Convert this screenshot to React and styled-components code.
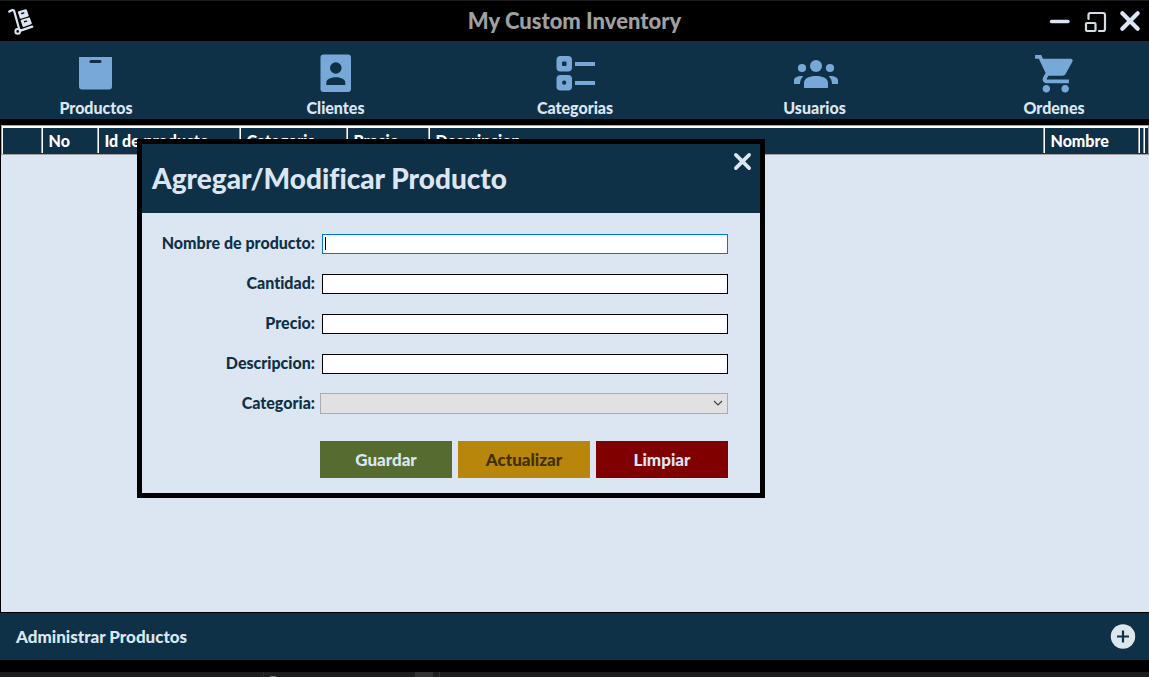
import React from "react";
import styled, { createGlobalStyle } from "styled-components";

const navy = "#0f3147";
const pale = "#dce6f2";
const sky = "#78a8d8";

const GlobalStyle = createGlobalStyle`
  * { box-sizing: border-box; }
  body {
    margin: 0;
    background: #1e1e1e;
    font-family: Lato, "Liberation Sans", sans-serif;
    font-weight: 900;
    font-size: 16px;
    line-height: 24px;
    font-variant-ligatures: none;
  }
  button, input, select { font: inherit; font-variant-ligatures: none; }
`;

const Page = styled.div`
  min-height: 100vh;
  display: flex;
  flex-direction: column;
  border-top: 1px solid #1c1c1c;
  background: #000;
`;

const TitleBar = styled.header`
  height: 40px;
  display: flex;
  align-items: center;
  justify-content: space-between;
  padding: 0 8px;
`;

const Title = styled.h1`
  margin: 0;
  font-size: 22px;
  font-weight: 900;
  line-height: 40px;
  color: #a0a0a0;
`;

const TitleSide = styled.div`
  flex: 1;
  display: flex;
  align-items: center;
  justify-content: ${(p) => (p.$end ? "flex-end" : "flex-start")};
  gap: 12px;
`;

const IconButton = styled.button`
  display: flex;
  padding: 0;
  border: 0;
  background: none;
  color: ${pale};
`;

const Nav = styled.nav`
  display: flex;
  justify-content: space-between;
  height: 78px;
  padding: 8px 35px 0 36px;
  background: ${navy};
`;

const NavButton = styled.button`
  width: 120px;
  display: flex;
  flex-direction: column;
  align-items: center;
  padding: 0;
  border: 0;
  background: none;
  color: ${pale};
  line-height: 22px;
`;

const Main = styled.main`
  position: relative;
  flex: 1;
  margin-top: 6px;
  border-left: 1px solid #000;
  border-bottom: 1px solid #000;
  background: ${pale};
`;

const Table = styled.table`
  width: 100%;
  table-layout: fixed;
  border-collapse: collapse;
  background: ${navy};
  color: #fff;
  border: 1px solid #a0a0a0;
  box-shadow: inset 1px 2px 0 #fff;
`;

const HeadCell = styled.th`
  height: 29px;
  padding: 0;
  text-align: left;
  vertical-align: middle;
  font-weight: 900;
`;

const HeadLabel = styled.div`
  height: 25px;
  padding-left: 6px;
  line-height: 25px;
  overflow: hidden;
  white-space: nowrap;
  border-left: ${(p) => (p.$first ? "0" : "1px solid #fff")};
  box-shadow: ${(p) => (p.$first ? "none" : "-1px 0 0 #a0a0a0")};
`;

const Dialog = styled.section`
  position: absolute;
  top: 14px;
  left: 136px;
  width: 628px;
  border: 5px solid #000;
  background: ${pale};
  color: ${navy};
`;

const DialogHeader = styled.div`
  display: flex;
  align-items: flex-start;
  justify-content: space-between;
  height: 69px;
  padding: 8px 8px 0 10px;
  background: ${navy};
  color: ${pale};
`;

const DialogTitle = styled.h2`
  margin: 0;
  font-size: 28px;
  font-weight: 900;
  line-height: 52px;
`;

const Form = styled.form`
  display: flex;
  flex-direction: column;
  gap: 16px;
  padding: 18px 32px 15px 14px;
`;

const Field = styled.div`
  display: grid;
  grid-template-columns: 159px 1fr;
  align-items: center;
  column-gap: 7px;
  height: 24px;
`;

const Label = styled.label`
  text-align: right;
  white-space: nowrap;
`;

const Input = styled.input`
  width: 100%;
  height: 20px;
  margin: 2px 0 0;
  padding: 0 2px;
  border: 1px solid #000;
  border-radius: 0;
  outline: 0;
  background: #fff;
  font-size: 14px;
  caret-color: transparent;
  &:focus {
    border-color: #0078d7;
    background: linear-gradient(#000, #000) 2px 2px / 1px 13px no-repeat #fff;
  }
`;

const SelectWrap = styled.div`
  display: flex;
  align-items: center;
  margin-left: -2px;
  padding-right: 4px;
  border: 1px solid #adadad;
  background: #e1e1e1;
`;

const Select = styled.select`
  flex: 1;
  height: 19px;
  border: 0;
  outline: 0;
  appearance: none;
  background: none;
`;

const Actions = styled.div`
  display: grid;
  grid-template-columns: repeat(3, 1fr);
  gap: 6px;
  margin: 10px 0 0 164px;
`;

const ActionButton = styled.button`
  height: 37px;
  padding: 0;
  border: 0;
  font-size: 17px;
  background: ${(p) => p.$bg};
  color: ${(p) => p.$fg || pale};
`;

const Footer = styled.footer`
  display: flex;
  align-items: center;
  justify-content: space-between;
  height: 47px;
  padding: 0 13px 0 16px;
  font-size: 17px;
  background: ${navy};
  color: ${pale};
`;

const BottomEdge = styled.div`
  height: 17px;
  border-top: 12px solid #000;
  background:
    linear-gradient(#333, #333) 415px 0 / 18px 5px no-repeat,
    linear-gradient(#333, #333) 439px 0 / 1px 5px no-repeat,
    linear-gradient(#2c2c2c, #2c2c2c) 263px 0 / 1px 5px no-repeat,
    linear-gradient(#777, #777) 270px 4px / 6px 1px no-repeat,
    #1e1e1e;
`;

const Dolly = () => (
  <svg width="26" height="28" viewBox="0 0 26 28" fill="none" stroke={pale} strokeLinecap="round" strokeLinejoin="round" aria-hidden="true">
    <path d="M1.200 4.600 4.500 2.900 6 3.500l5.300 19" strokeWidth="2.200" />
    <circle cx="9.700" cy="24.400" r="2.300" strokeWidth="2" />
    <path d="m12.500 23.600 11.700-4" strokeWidth="2.300" />
    <path d="m10.900 5.300 7-2 1.800 5.200-7 2.200zM13.700 13.600l7.300-2.200 1.800 5-7.300 2.600z" fill={pale} strokeWidth="2" />
    <path d="m13.800 6.500 2-.6M16.600 14.700l2-.6" stroke="#000" strokeWidth="1.400" />
  </svg>
);

const CloseIcon = ({ size }) => (
  <svg width={size} height={size} viewBox="0 0 20 20" fill="none" stroke="currentColor" strokeWidth="3.800" strokeLinecap="round" aria-hidden="true">
    <path d="m3 3 14 14M17 3 3 17" />
  </svg>
);

const NavIcon = ({ children }) => (
  <svg width="48" height="48" viewBox="0 0 48 48" fill={sky} aria-hidden="true">{children}</svg>
);

const sections = [
  ["Productos", <>
    <path d="M7 8h33v29.500a3 3 0 0 1-3 3H10a3 3 0 0 1-3-3z" />
    <rect x="17.500" y="11" width="12" height="3" rx="1.500" fill={navy} />
  </>],
  ["Clientes", <>
    <rect x="8.500" y="5.500" width="30.500" height="37.500" rx="3" />
    <circle cx="23.800" cy="19" r="5.800" fill={navy} />
    <path d="M14.300 36v-2.500c0-3 4-5.300 9.500-5.300s9.500 2.300 9.500 5.300V36z" fill={navy} />
  </>],
  ["Categorias", <>
    <rect x="5.500" y="7" width="15.500" height="15.500" rx="4" />
    <rect x="5.500" y="26" width="15.500" height="15.500" rx="4" />
    <rect x="11" y="12.500" width="4.500" height="4.500" rx="1" fill={navy} />
    <circle cx="13.200" cy="33.700" r="2.100" fill={navy} />
    <path d="M24 13h20v4H24zM24 32h20v4H24z" />
  </>],
  ["Usuarios", <>
    <circle cx="25" cy="17" r="6" />
    <circle cx="11" cy="19" r="4.100" />
    <circle cx="39" cy="19" r="4.100" />
    <path d="M13 39v-5c0-4.500 5-7 12-7s12 2.500 12 7v5zM3 35v-3.500C3 28.500 6 27 11 27q.8 0 1.200.3C10 29.500 9 32 9 35zM47 35v-3.500c0-3-3-4.500-8-4.500q-.8 0-1.200.3C40 29.500 41 32 41 35z" />
  </>],
  ["Ordenes", <g transform="translate(3.200 2.200) scale(1.880)">
    <path d="M7 18c-1.100 0-2 .9-2 2s.9 2 2 2 2-.9 2-2-.9-2-2-2zM1 2v2h2l3.600 7.590-1.350 2.450C4.520 15.370 5.480 17 7 17h12v-2H7.420c-.14 0-.25-.11-.25-.25l.03-.12.9-1.630h7.450c.75 0 1.410-.41 1.750-1.030l3.580-6.490C21.250 4.820 20.760 4 20.010 4H5.210l-.94-2H1zm16 16c-1.100 0-2 .9-2 2s.9 2 2 2 2-.9 2-2-.9-2-2-2z" />
  </g>],
];

const columns = [
  ["", 40], ["No", 56], ["Id de producto", 142], ["Categoria", 107],
  ["Precio", 82], ["Descripcion", null], ["Nombre", 95], ["", 5], ["", 5],
];

const fields = [
  ["nombre", "Nombre de producto:"],
  ["cantidad", "Cantidad:"],
  ["precio", "Precio:"],
  ["descripcion", "Descripcion:"],
];

export default function App() {
  return (
    <Page>
      <GlobalStyle />
      <TitleBar>
        <TitleSide><Dolly /></TitleSide>
        <Title>My Custom Inventory</Title>
        <TitleSide $end>
          <IconButton aria-label="Minimizar">
            <svg width="24" height="24" viewBox="0 0 24 24" fill="none" stroke="currentColor" strokeWidth="3.400" strokeLinecap="round"><path d="M4.500 12.500h16.500" /></svg>
          </IconButton>
          <IconButton aria-label="Restaurar">
            <svg width="24" height="24" viewBox="0 0 24 24" fill="none" stroke="#d3dee3" strokeWidth="2.200" strokeLinecap="round" strokeLinejoin="round">
              <path d="M5.500 10V6a2 2 0 0 1 2-2h12.500a2 2 0 0 1 2 2v14a2 2 0 0 1-2 2h-4" />
              <rect x="3" y="14" width="9.500" height="8" rx="1" />
            </svg>
          </IconButton>
          <IconButton aria-label="Cerrar"><CloseIcon size={22} /></IconButton>
        </TitleSide>
      </TitleBar>

      <Nav>
        {sections.map(([name, drawing]) => (
          <NavButton key={name}>
            <NavIcon>{drawing}</NavIcon>
            {name}
          </NavButton>
        ))}
      </Nav>

      <Main>
        <Table>
          <colgroup>
            {columns.map(([, width], i) => <col key={i} width={width || undefined} />)}
          </colgroup>
          <thead>
            <tr>
              {columns.map(([name], i) => (
                <HeadCell key={i}><HeadLabel $first={i === 0}>{name}</HeadLabel></HeadCell>
              ))}
            </tr>
          </thead>
        </Table>

        <Dialog role="dialog" aria-labelledby="dialog-title">
          <DialogHeader>
            <DialogTitle id="dialog-title">Agregar/Modificar Producto</DialogTitle>
            <IconButton aria-label="Cerrar formulario"><CloseIcon size={19} /></IconButton>
          </DialogHeader>
          <Form onSubmit={(e) => e.preventDefault()}>
            {fields.map(([id, text], i) => (
              <Field key={id}>
                <Label htmlFor={id}>{text}</Label>
                <Input id={id} autoFocus={i === 0} />
              </Field>
            ))}
            <Field>
              <Label htmlFor="categoria">Categoria:</Label>
              <SelectWrap>
                <Select id="categoria" defaultValue=""><option value="" /></Select>
                <svg width="10" height="10" viewBox="0 0 10 10" fill="none" stroke="#444" strokeWidth="1.200" aria-hidden="true"><path d="m1 3 4 4 4-4" /></svg>
              </SelectWrap>
            </Field>
            <Actions>
              <ActionButton type="submit" $bg="#556b2f">Guardar</ActionButton>
              <ActionButton type="button" $bg="#b8860b" $fg="#403000">Actualizar</ActionButton>
              <ActionButton type="reset" $bg="#800000">Limpiar</ActionButton>
            </Actions>
          </Form>
        </Dialog>
      </Main>

      <Footer>
        <span>Administrar Productos</span>
        <IconButton aria-label="Agregar producto">
          <svg width="26" height="26" viewBox="0 0 26 26"><circle cx="13" cy="12.500" r="12.200" fill="#dce6eb" /><path d="M13 6.500v12M7 12.500h12" stroke={navy} strokeWidth="2.200" /></svg>
        </IconButton>
      </Footer>
      <BottomEdge />
    </Page>
  );
}
